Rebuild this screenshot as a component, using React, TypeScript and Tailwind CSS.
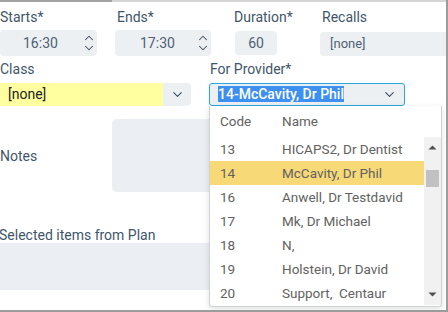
import { ChevronDown, ChevronUp } from 'lucide-react';

const PROVIDERS = [
  { code: '13', name: 'HICAPS2, Dr Dentist' },
  { code: '14', name: 'McCavity, Dr Phil', active: true },
  { code: '16', name: 'Anwell, Dr Testdavid' },
  { code: '17', name: 'Mk, Dr Michael' },
  { code: '18', name: 'N,' },
  { code: '19', name: 'Holstein, Dr David' },
  { code: '20', name: 'Support,  Centaur' },
];

function Label({ children }: { children: React.ReactNode }) {
  return <div className="h-4 text-[14px] leading-4 text-[#3f566a]">{children}</div>;
}

function Spinner() {
  return (
    <div className="flex flex-col items-center text-[#3e4f60]">
      <ChevronUp size={14} strokeWidth={1.8} className="-mb-[2px]" />
      <ChevronDown size={14} strokeWidth={1.8} className="-mt-[2px]" />
    </div>
  );
}

export default function App() {
  return (
    <div
      className="relative h-[312px] w-[448px] overflow-hidden border-r-2 border-b-2 border-[#9c9c9c] bg-white text-[13px]"
      style={{ fontFamily: 'Roboto, "Liberation Sans", sans-serif' }}
    >
      {/* top frame edge */}
      <div className="flex h-[2px]">
        <div className="w-[112px] bg-[#a3a3a3]" />
        <div className="flex-1 bg-[#d4d6d8]" />
      </div>

      {/* Starts / Ends / Duration / Recalls */}
      <div className="flex pt-[7px]">
        <div className="w-[97px]">
          <Label>Starts*</Label>
          <div className="mt-[5px] flex h-[26px] items-center rounded-[4px] bg-[#edf0f3] pl-[23px] pr-[1px] text-[14px] text-[#4f6173]">
            <span className="flex-1">16:30</span>
            <Spinner />
          </div>
        </div>
        <div className="ml-[18px] w-[96px]">
          <Label>
            <span className="pl-[2px]">Ends*</span>
          </Label>
          <div className="mt-[5px] flex h-[26px] items-center rounded-[4px] bg-[#edf0f3] pl-[25px] pr-[1px] text-[14px] text-[#4f6173]">
            <span className="flex-1">17:30</span>
            <Spinner />
          </div>
        </div>
        <div className="ml-[24px] w-[42px]">
          <div className="-ml-px">
            <Label>Duration*</Label>
          </div>
          <div className="mt-[6px] flex h-[24px] items-center justify-center rounded-[4px] bg-[#edf0f3] text-[14px] text-[#4f6173]">
            60
          </div>
        </div>
        <div className="ml-[43px] flex-1">
          <div className="pl-[2px]">
            <Label>Recalls</Label>
          </div>
          <div className="mt-[7px] flex h-[24px] items-center rounded-l-[4px] bg-[#edf0f3] pl-[10px] text-[13px] text-[#4f6173]">
            [none]
          </div>
        </div>
      </div>

      {/* Class / For Provider */}
      <div className="mt-[5px] flex">
        <div className="w-[191px]">
          <Label>Class</Label>
          <div className="mt-[6px] flex h-[23px] overflow-hidden rounded-r-[4px] bg-[#edf0f3]">
            <div className="flex w-[163px] items-center bg-[#ffff9f] pl-[8px] text-[14px] text-[#222]">[none]</div>
            <div className="flex flex-1 items-center justify-center text-[#3e4f60]">
              <ChevronDown size={15} strokeWidth={1.8} />
            </div>
          </div>
        </div>
        <div className="ml-[18px] w-[196px]">
          <div className="pl-px">
            <Label>For Provider*</Label>
          </div>
          <div className="mt-[6px] flex h-[23px] items-center rounded-[3px] border border-[#27a8dc] bg-[#edf0f3] pl-[8px] pr-[7px]">
            <span className="flex-1">
              <span className="bg-[#3d8ff0] text-[14px] font-medium leading-[19px] text-white">14-McCavity, Dr Phil</span>
            </span>
            <ChevronDown size={15} strokeWidth={1.8} className="text-[#3e4f60]" />
          </div>
        </div>
      </div>

      {/* Notes */}
      <div className="mt-[13px] flex items-center">
        <div className="w-[112px]">
          <Label>Notes</Label>
        </div>
        <div className="h-[73px] w-[293px] rounded-l-[5px] bg-[#ebeef2]" />
      </div>

      {/* Selected items */}
      <div className="mt-[35px]">
        <div className="-ml-px">
          <Label>Selected items from Plan</Label>
        </div>
        <div className="h-[47px] w-[440px] bg-[#ebeef2]" />
      </div>

      {/* provider dropdown */}
      <div className="absolute left-[209px] top-[106px] h-[201px] w-[233px] rounded-b-[3px] border border-t-0 border-[#cfd3d6] bg-white text-[13.5px] text-[#626262] shadow-[0_2px_6px_rgba(0,0,0,0.12)]">
        <div className="flex h-[31px] items-center pl-[10px]">
          <span className="w-[62px]">Code</span>
          <span>Name</span>
        </div>
        <div className="flex">
          <div className="w-[214px]">
            {PROVIDERS.map((p) => (
              <div
                key={p.code}
                className={`flex h-6 items-center whitespace-pre pl-[10px] ${p.active ? 'bg-[#f8d977]' : ''}`}
              >
                <span className="w-[62px]">{p.code}</span>
                <span>{p.name}</span>
              </div>
            ))}
          </div>
          <div className="relative h-[168px] w-[17px] bg-[#f1f1f1]">
            <svg width="17" height="17" viewBox="0 0 17 17" className="absolute left-0 top-[2px]">
              <path d="M4.5 10.5 L8.5 6.5 L12.5 10.5 Z" fill="#505050" />
            </svg>
            <div className="absolute left-[2px] top-[33px] h-[17px] w-[13px] bg-[#c1c1c1]" />
            <svg width="17" height="17" viewBox="0 0 17 17" className="absolute bottom-[2px] left-0">
              <path d="M4.5 6.5 L8.5 10.5 L12.5 6.5 Z" fill="#505050" />
            </svg>
          </div>
        </div>
      </div>
    </div>
  );
}
